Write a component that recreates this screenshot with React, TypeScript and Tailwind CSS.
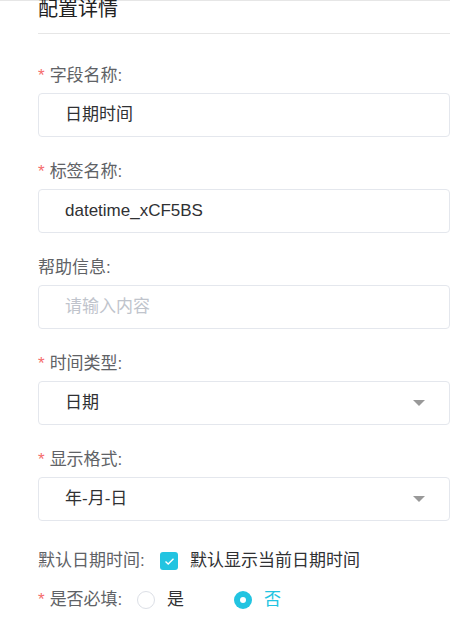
import React from "react";

const font = "font-['Liberation_Sans','Noto_Sans_CJK_SC',sans-serif]";

function Label({ text, required }: { text: string; required?: boolean }) {
  return (
    <div className="h-[24px] leading-[24px] mb-[5px] flex items-center text-[17px] text-[#606266]">
      {required && <span className="text-[#f56c6c] mr-[5px]">*</span>}
      <span>{text}</span>
    </div>
  );
}

function Box({ children, select }: { children: React.ReactNode; select?: boolean }) {
  return (
    <div className="h-[44px] border border-[#e4e7ed] rounded-[4px] bg-white flex items-center justify-between pl-[26px] pr-[24px] text-[17px]">
      {children}
      {select && (
        <svg width="12" height="6" viewBox="0 0 12 6">
          <path d="M0 0 L12 0 L6 6 Z" fill="#999999" />
        </svg>
      )}
    </div>
  );
}

export default function App() {
  return (
    <div className={`w-[450px] h-[638px] bg-white border-t border-[#e6e6e6] pl-[38px] ${font}`}>
      <div className="h-[33px] border-b border-[#e6e6e6] text-[20px] leading-[16px] text-[#222222]">配置详情</div>

      <div className="mt-[30px]">
        <Label text="字段名称:" required />
        <Box><span className="text-[#303133]">日期时间</span></Box>
      </div>
      <div className="mt-[23px]">
        <Label text="标签名称:" required />
        <Box><span className="text-[#303133]">datetime_xCF5BS</span></Box>
      </div>
      <div className="mt-[23px]">
        <Label text="帮助信息:" />
        <Box><span className="text-[#c0c4cc]">请输入内容</span></Box>
      </div>
      <div className="mt-[23px]">
        <Label text="时间类型:" required />
        <Box select><span className="text-[#303133]">日期</span></Box>
      </div>
      <div className="mt-[23px]">
        <Label text="显示格式:" required />
        <Box select><span className="text-[#303133]">年-月-日</span></Box>
      </div>

      <div className="mt-[28px] h-[24px] flex items-center text-[17px]">
        <div className="w-[122px] text-[#606266]">默认日期时间:</div>
        <div className="w-[18px] h-[18px] rounded-[3px] bg-[#22c4e1] flex items-center justify-center">
          <svg width="11" height="9" viewBox="0 0 11 9">
            <path d="M1.5 4.5 L4.2 7 L9.5 1.8" stroke="white" strokeWidth="1.4" fill="none" />
          </svg>
        </div>
        <span className="ml-[12px] text-[#303133]">默认显示当前日期时间</span>
      </div>

      <div className="mt-[15px] h-[24px] flex items-center text-[17px]">
        <div className="w-[99px] flex items-center text-[#606266] whitespace-nowrap">
          <span className="text-[#f56c6c] mr-[5px]">*</span>
          <span>是否必填:</span>
        </div>
        <div className="w-[18px] h-[18px] rounded-full border border-[#dcdfe6] bg-white" />
        <span className="ml-[12px] mr-[50px] text-[#303133]">是</span>
        <div className="w-[18px] h-[18px] rounded-full bg-[#22c4e1] flex items-center justify-center">
          <div className="w-[6px] h-[6px] rounded-full bg-white" />
        </div>
        <span className="ml-[12px] text-[#22c4e1]">否</span>
      </div>
    </div>
  );
}
